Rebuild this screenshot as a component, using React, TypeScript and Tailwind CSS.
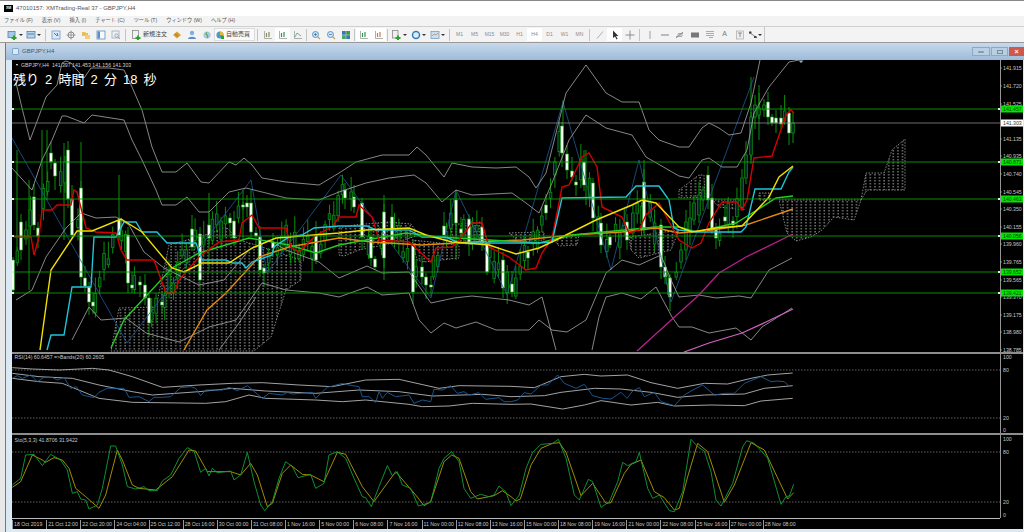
import type { ReactNode } from "react";

type Pt = [number, number];
type Pt3 = [number, number, number];

const pl = (pts: Pt[]) => pts.map(([x, y]) => `${x},${y}`).join(" ");
// points read off 3x crops of the lower panes
const fromCrop = (pts: Pt[], ox: number, oy: number): Pt[] => pts.map(([x, y]) => [x / 3 + ox, y / 3 + oy]);

const hLines = [
  { y: 109, label: "141.457" },
  { y: 162, label: "140.871" },
  { y: 199, label: "140.463" },
  { y: 236, label: "140.056" },
  { y: 272, label: "139.652" },
  { y: 293, label: "139.421" },
];

const priceTicks: [string, number][] = [
  ["141.915", 68], ["141.720", 86], ["141.525", 104], ["141.135", 139], ["140.935", 156], ["140.740", 174],
  ["140.545", 192], ["140.350", 209], ["140.155", 227], ["139.960", 244], ["139.765", 262], ["139.565", 280],
  ["139.370", 297], ["139.175", 315], ["138.980", 332], ["138.785", 350],
];

const bands: Pt[][] = [
  [[17, 83], [23, 108], [31, 140], [43, 108], [47, 97], [58, 85], [63, 63], [67, 61], [72, 63], [85, 78], [92, 68], [110, 68], [125, 70], [133, 87], [143, 110], [153, 147], [163, 172], [177, 172], [188, 163], [202, 182], [210, 183], [230, 162], [237, 165], [245, 158], [253, 165], [263, 178], [287, 182], [320, 185], [340, 173], [357, 162], [383, 155], [410, 155], [418, 147], [427, 155], [445, 177], [453, 163], [473, 167], [497, 168], [517, 167], [530, 177], [537, 188], [547, 173], [567, 93], [587, 65], [607, 93], [623, 102], [640, 102], [650, 130], [660, 140], [680, 147], [690, 147], [703, 128], [710, 123], [720, 128], [730, 135], [742, 133], [752, 103], [761, 60]],
  [[13, 168], [33, 190], [43, 160], [53, 140], [63, 116], [67, 116], [85, 123], [93, 115], [125, 120], [133, 140], [143, 160], [157, 190], [163, 205], [177, 205], [188, 197], [200, 212], [210, 212], [230, 192], [247, 188], [263, 192], [287, 198], [320, 200], [340, 192], [367, 183], [390, 178], [415, 175], [427, 183], [443, 202], [457, 190], [473, 195], [513, 193], [527, 203], [540, 213], [553, 183], [570, 140], [587, 115], [607, 128], [633, 135], [647, 157], [680, 176], [690, 178], [703, 160], [710, 158], [723, 167], [738, 167], [748, 150], [755, 113], [770, 87], [790, 62], [800, 60]],
  [[17, 300], [33, 290], [47, 257], [67, 228], [82, 213], [97, 218], [117, 217], [130, 225], [145, 252], [165, 268], [200, 285], [225, 280], [250, 250], [270, 240], [287, 250], [320, 262], [340, 278], [368, 266], [383, 273], [410, 272], [432, 303], [455, 298], [473, 296], [510, 300], [530, 305], [543, 297], [557, 350]],
  [[73, 340], [90, 307], [102, 320], [127, 318], [147, 333], [180, 342], [210, 327], [237, 320], [263, 283], [287, 290], [320, 293], [340, 297], [368, 287], [383, 295], [410, 293], [420, 320], [432, 333], [445, 323], [457, 328], [477, 322], [497, 330], [530, 330], [540, 320], [553, 330], [568, 332], [587, 320], [607, 273], [623, 260], [640, 265], [662, 255], [672, 280], [680, 297], [700, 295], [717, 298], [740, 296], [752, 298], [770, 270], [793, 258]],
  [[593, 350], [600, 317], [607, 297], [623, 293], [642, 299], [657, 287], [673, 317], [680, 327], [693, 327], [710, 333], [737, 328], [752, 340], [763, 327], [793, 308]],
  [[220, 350], [240, 323], [257, 297]],
];

const zigzag: Pt[] = [[13, 138], [128, 343], [252, 180], [268, 273], [342, 175], [432, 298], [457, 190], [508, 295], [564, 102], [612, 270], [640, 160], [672, 302], [755, 77]];

const red: Pt[] = [[15, 237], [32, 237], [35, 255], [40, 237], [43, 210], [53, 210], [58, 205], [72, 205], [75, 190], [78, 192], [87, 228], [97, 232], [117, 233], [122, 250], [128, 260], [155, 260], [167, 293], [175, 293], [180, 280], [200, 257], [220, 242], [240, 240], [243, 223], [253, 215], [260, 228], [287, 228], [292, 247], [300, 252], [317, 235], [333, 227], [340, 217], [357, 217], [360, 205], [373, 217], [380, 240], [410, 242], [432, 262], [437, 248], [453, 247], [460, 240], [473, 223], [483, 223], [490, 247], [510, 257], [527, 270], [537, 268], [543, 253], [553, 238], [560, 203], [563, 187], [570, 185], [583, 157], [590, 153], [598, 167], [603, 207], [623, 217], [630, 233], [640, 230], [647, 215], [660, 203], [673, 227], [680, 240], [693, 248], [702, 243], [710, 223], [723, 202], [738, 202], [743, 210], [748, 200], [755, 158], [773, 156], [787, 115], [792, 110], [795, 113]];

const cyan: Pt[] = [[48, 350], [52, 335], [65, 335], [73, 287], [92, 287], [95, 237], [117, 237], [125, 222], [137, 222], [143, 232], [158, 232], [168, 243], [197, 243], [203, 260], [227, 260], [233, 263], [243, 263], [247, 268], [253, 262], [273, 255], [275, 247], [290, 237], [303, 235], [315, 228], [340, 226], [368, 226], [377, 230], [410, 230], [423, 237], [447, 237], [460, 243], [483, 243], [540, 243], [553, 242], [563, 198], [627, 197], [637, 186], [660, 186], [670, 200], [675, 228], [680, 230], [700, 232], [742, 232], [747, 227], [756, 189], [782, 189], [790, 172], [794, 167]];

const yellow: Pt[] = [[41, 350], [52, 270], [78, 231], [93, 231], [122, 219], [143, 232], [173, 268], [185, 272], [203, 263], [230, 263], [253, 248], [277, 238], [340, 233], [367, 230], [410, 228], [427, 235], [453, 242], [467, 243], [490, 245], [517, 254], [540, 248], [557, 240], [597, 220], [633, 205], [643, 200], [657, 203], [680, 227], [693, 232], [717, 228], [743, 226], [770, 197], [780, 177], [794, 166]];

const green: Pt[] = [[112, 348], [125, 320], [173, 268], [200, 253], [250, 238], [290, 245], [317, 253], [340, 245], [367, 240], [407, 233], [440, 237], [540, 243], [573, 235], [657, 227], [680, 227], [697, 232], [737, 223], [750, 215], [777, 198], [794, 196]];

const orange: Pt[] = [[185, 350], [208, 310], [227, 293], [260, 257], [290, 247], [340, 238], [373, 242], [423, 245], [473, 242], [523, 240], [573, 235], [623, 232], [657, 228], [680, 233], [713, 230], [747, 225], [794, 209]];

const magenta: Pt[] = [[638, 351], [680, 313], [700, 295], [720, 273], [747, 257], [794, 234]];
const pink: Pt[] = [[685, 352], [710, 343], [743, 333], [767, 322], [794, 309]];

const clouds: Pt[][] = [
  [[120, 308], [157, 307], [170, 245], [213, 233], [227, 227], [240, 240], [257, 245], [302, 260], [302, 280], [287, 290], [272, 337], [255, 351], [112, 351]],
  [[340, 228], [355, 225], [390, 222], [412, 224], [420, 235], [405, 240], [385, 245], [360, 250], [345, 256], [340, 255]],
  [[413, 240], [460, 245], [460, 258], [425, 262], [418, 260]],
  [[450, 225], [482, 222], [485, 240], [470, 245], [455, 240]],
  [[510, 233], [545, 232], [545, 240], [520, 242]],
  [[555, 240], [580, 235], [578, 245], [560, 246]],
  [[630, 237], [680, 230], [672, 250], [640, 258], [632, 250]],
  [[680, 190], [700, 175], [705, 175], [706, 197], [680, 198]],
  [[713, 200], [743, 200], [745, 210], [720, 207]],
  [[760, 193], [770, 193], [772, 200], [760, 200]],
  [[780, 200], [862, 200], [855, 220], [835, 217], [823, 230], [812, 237], [797, 241], [788, 233]],
  [[862, 200], [867, 173], [885, 173], [893, 150], [906, 139], [906, 190], [868, 190]],
];

// white candles: x, body top, body bottom
const whites: Pt3[] = [
  [14, 260, 290], [22, 222, 250], [35, 197, 225], [39, 228, 236], [52, 153, 162], [56, 163, 176], [69, 150, 199], [73, 199, 235], [82, 188, 277], [86, 278, 286], [90, 287, 302], [94, 302, 306], [120, 220, 235], [129, 235, 283], [133, 285, 288], [141, 282, 285], [146, 285, 298], [150, 298, 323], [163, 302, 305], [193, 229, 247], [201, 234, 280], [210, 225, 238], [231, 218, 223], [235, 221, 238], [244, 205, 207], [248, 203, 207], [252, 203, 232], [257, 233, 236], [261, 237, 270], [265, 268, 273], [274, 242, 248], [317, 235, 260],
  [346, 190, 198], [355, 197, 207], [363, 203, 237], [372, 237, 258], [376, 259, 267], [385, 212, 258], [393, 217, 240], [414, 245, 292], [423, 267, 277], [427, 277, 285], [432, 285, 287], [445, 226, 235], [457, 200, 223], [462, 229, 233], [470, 219, 243], [483, 227, 243], [488, 243, 272], [504, 260, 288], [513, 284, 292], [529, 252, 258], [547, 205, 213], [563, 126, 153], [568, 154, 170], [573, 171, 177], [577, 182, 185], [585, 162, 185], [594, 183, 218], [602, 223, 245], [611, 237, 245], [628, 222, 240], [645, 182, 228], [662, 225, 267], [666, 267, 277], [671, 278, 297],
  [709, 175, 200], [713, 198, 230], [717, 230, 238], [726, 217, 221], [734, 221, 225], [769, 102, 117], [773, 117, 123], [777, 118, 123], [782, 118, 124], [790, 113, 133],
];

const darks: Pt3[] = [[682, 250, 262], [687, 222, 250], [691, 218, 232], [695, 203, 220], [700, 195, 215], [704, 190, 200], [743, 178, 207], [747, 155, 178], [752, 117, 155], [756, 105, 117], [760, 108, 115], [765, 105, 110], [794, 123, 133]];

const longWicks: Pt3[] = [[43, 130, 210], [48, 130, 200], [65, 143, 240], [82, 142, 190], [120, 175, 240], [210, 193, 270], [244, 190, 240], [457, 190, 260], [564, 100, 130], [645, 160, 235], [752, 77, 160], [760, 85, 140], [18, 150, 262], [30, 180, 290], [385, 195, 280], [587, 150, 205]];

// fill the bars between the ones read off the crop
function fillerBars() {
  const known = [...whites, ...darks].sort((a, b) => a[0] - b[0]);
  const out: Pt3[] = [];
  for (let i = 0; i < 180; i++) {
    const x = 14 + i * 4.335;
    if (known.some((k) => Math.abs(k[0] - x) < 2.2)) continue;
    const next = known.findIndex((k) => k[0] > x);
    const a = known[Math.max(next - 1, 0)];
    const b = known[next < 0 ? known.length - 1 : next];
    const t = b[0] === a[0] ? 0 : (x - a[0]) / (b[0] - a[0]);
    const mid = (a[1] + a[2]) / 2 + (((b[1] + b[2]) / 2 - (a[1] + a[2]) / 2) * t) + ((i * 13) % 21) - 10;
    const h = 5 + ((i * 7) % 17);
    out.push([x, mid - h / 2, mid + h / 2]);
  }
  return out;
}

const rsiUpper = [...fromCrop([[40, 68], [100, 72], [180, 75], [280, 70], [330, 75], [400, 95], [490, 127], [600, 120], [700, 115], [790, 113], [900, 120], [1000, 125], [1100, 105], [1200, 103], [1320, 130], [1380, 122], [1536, 124]], 0, 345), ...fromCrop([[70, 128], [90, 120], [150, 95], [220, 88], [270, 93], [350, 90], [420, 113], [500, 130], [580, 115], [650, 117], [720, 100], [770, 90], [845, 84]], 512, 345)];
const rsiMid = [...fromCrop([[40, 85], [120, 95], [220, 100], [300, 120], [400, 140], [460, 150], [600, 140], [700, 130], [800, 138], [950, 145], [1080, 135], [1200, 140], [1300, 153], [1450, 148], [1536, 155]], 0, 345), ...fromCrop([[100, 152], [150, 142], [250, 130], [330, 132], [420, 142], [500, 157], [580, 150], [700, 147], [760, 130], [845, 122]], 512, 345)];
const rsiLower = [...fromCrop([[40, 100], [120, 110], [190, 115], [300, 160], [400, 172], [620, 175], [680, 170], [750, 150], [800, 160], [950, 165], [1030, 170], [1100, 165], [1230, 178], [1270, 185], [1350, 183], [1420, 175], [1536, 178]], 0, 345), ...fromCrop([[60, 177], [155, 192], [220, 180], [270, 167], [360, 180], [440, 172], [490, 183], [600, 180], [700, 182], [750, 168], [845, 160]], 512, 345)];
const rsiLine = [...fromCrop([[40, 100], [55, 92], [70, 100], [95, 90], [115, 110], [135, 97], [160, 97], [175, 105], [195, 97], [215, 130], [232, 125], [250, 150], [285, 158], [300, 142], [325, 130], [355, 130], [375, 130], [390, 157], [420, 155], [450, 170], [465, 157], [490, 157], [515, 155], [545, 128], [575, 125], [590, 130], [605, 152], [620, 135], [670, 135], [690, 127], [715, 137], [745, 122], [790, 160], [810, 145], [850, 150], [865, 142], [880, 147], [940, 142], [950, 160], [985, 127], [1030, 115], [1050, 120], [1080, 125], [1090, 155], [1110, 155], [1130, 172], [1140, 140], [1150, 160], [1165, 142], [1190, 155], [1230, 150], [1245, 175], [1270, 165], [1295, 170], [1305, 133], [1330, 135], [1355, 122], [1375, 145], [1395, 140], [1410, 150], [1440, 143], [1460, 163], [1500, 158], [1515, 170], [1536, 170]], 0, 345), ...fromCrop([[20, 165], [40, 143], [60, 147], [90, 120], [110, 120], [140, 90], [160, 115], [195, 130], [220, 118], [245, 152], [275, 160], [300, 162], [330, 142], [348, 160], [365, 138], [385, 128], [400, 155], [430, 142], [450, 170], [490, 182], [520, 150], [540, 138], [575, 120], [610, 150], [640, 145], [670, 145], [700, 115], [750, 95], [780, 110], [800, 108], [820, 110], [835, 125]], 512, 345)];

const stoMain = [...fromCrop([[40, 420], [65, 400], [80, 330], [105, 328], [130, 362], [155, 328], [185, 345], [205, 375], [220, 445], [235, 440], [245, 462], [260, 465], [270, 492], [295, 480], [310, 430], [335, 303], [350, 303], [370, 360], [385, 425], [410, 432], [435, 425], [450, 437], [475, 437], [490, 408], [515, 390], [540, 340], [565, 308], [585, 318], [605, 382], [620, 370], [630, 393], [640, 370], [655, 383], [695, 378], [705, 405], [725, 390], [745, 322], [765, 410], [785, 480], [797, 497], [820, 470], [840, 400], [860, 350], [880, 365], [897, 398], [935, 388], [950, 430], [975, 415], [990, 330], [1015, 320], [1040, 340], [1065, 400], [1090, 455], [1100, 458], [1117, 485], [1140, 425], [1165, 362], [1180, 392], [1195, 380], [1210, 420], [1235, 430], [1258, 483], [1295, 472], [1320, 370], [1335, 340], [1358, 320], [1380, 350], [1395, 430], [1415, 460], [1445, 448], [1470, 455], [1485, 450], [1500, 423], [1520, 440], [1536, 482]], 0, 345), ...fromCrop([[25, 450], [45, 370], [65, 322], [90, 298], [125, 295], [142, 283], [165, 340], [190, 450], [205, 465], [232, 403], [245, 410], [270, 487], [295, 470], [320, 410], [335, 352], [350, 362], [375, 350], [385, 322], [410, 430], [425, 460], [445, 450], [475, 497], [490, 500], [515, 440], [540, 283], [560, 305], [580, 318], [600, 380], [615, 465], [630, 483], [665, 415], [695, 305], [707, 287], [730, 295], [770, 340], [810, 478], [825, 455], [835, 453], [848, 418]], 512, 345)];
const stoSignal = [...fromCrop([[40, 427], [65, 410], [100, 330], [130, 345], [140, 352], [165, 338], [190, 345], [210, 370], [230, 430], [260, 455], [300, 490], [320, 450], [355, 315], [370, 345], [400, 420], [420, 430], [470, 435], [520, 395], [570, 315], [590, 318], [625, 380], [695, 380], [725, 390], [755, 355], [775, 390], [805, 485], [820, 475], [850, 385], [875, 360], [910, 388], [935, 390], [975, 410], [1015, 322], [1040, 328], [1090, 425], [1125, 470], [1150, 435], [1190, 380], [1250, 450], [1275, 482], [1295, 470], [1335, 350], [1358, 330], [1380, 340], [1415, 440], [1435, 462], [1485, 452], [1510, 437], [1536, 455]], 0, 345), ...fromCrop([[15, 468], [28, 462], [60, 360], [90, 310], [125, 295], [145, 293], [165, 322], [210, 452], [245, 415], [285, 475], [300, 473], [340, 385], [360, 358], [390, 345], [430, 440], [460, 458], [490, 495], [505, 490], [530, 395], [560, 295], [590, 320], [640, 472], [670, 420], [720, 293], [760, 315], [830, 462], [848, 443]], 512, 345)];

const dates = ["18 Oct 2019", "21 Oct 12:00", "22 Oct 20:00", "24 Oct 04:00", "25 Oct 12:00", "28 Oct 16:00", "30 Oct 00:00", "31 Oct 08:00", "1 Nov 16:00", "5 Nov 00:00", "6 Nov 08:00", "7 Nov 16:00", "11 Nov 00:00", "12 Nov 08:00", "13 Nov 16:00", "15 Nov 00:00", "18 Nov 08:00", "19 Nov 16:00", "21 Nov 00:00", "22 Nov 08:00", "25 Nov 16:00", "27 Nov 00:00", "28 Nov 08:00"];

const menus = ["ファイル (F)", "表示 (V)", "挿入 (I)", "チャート (C)", "ツール (T)", "ウィンドウ (W)", "ヘルプ (H)"];

const Sep = () => <div className="mx-[2px] h-[12px] w-[1px] shrink-0 bg-[#c4c4c4]" />;
const SepThin = () => <div className="mx-[1px] h-[12px] w-[1px] shrink-0 bg-[#c4c4c4]" />;
const Drop = () => <div className="mr-[2px] h-0 w-0 shrink-0 border-x-[2px] border-t-[2px] border-x-transparent border-t-[#333]" />;
const Tool = ({ children, active, w = "w-[15px]" }: { children: ReactNode; active?: boolean; w?: string }) => (
  <div className={`flex h-[13px] shrink-0 items-center justify-center ${w} ${active ? "bg-white" : ""}`}>{children}</div>
);
const Ico = ({ children }: { children: ReactNode }) => (
  <svg viewBox="0 0 10 10" className="h-[10px] w-[10px]" fill="none">
    {children}
  </svg>
);

const Plus = () => <path d="M6 5.5h2v1.5h1.5v2H8v1H6V9H4.5V7H6z" fill="#2aa52a" />;
const MiniChart = ({ c }: { c: string }) => (
  <Ico>
    <path d="M1.5 1v7.5H9" stroke="#9a9a9a" strokeWidth="0.8" />
    <path d="M3.5 3v4M6 2v5" stroke={c} strokeWidth="1.2" />
  </Ico>
);
const Tf = ({ t, active }: { t: string; active?: boolean }) => (
  <Tool active={active}>
    <span className="text-[5px] text-[#8a8a8a]">{t}</span>
  </Tool>
);

function Toolbar() {
  return (
    <div className="flex h-[15px] w-[765px] shrink-0 items-center border-r border-[#c8c8c8] pl-[4px]">
      <Tool><Ico><rect x="1" y="1.5" width="7" height="6" fill="#a8c8e4" stroke="#4f81b3" strokeWidth="0.8" /><Plus /></Ico></Tool>
      <Drop />
      <Tool w="w-[12px]"><Ico><rect x="1" y="1.5" width="8" height="6.5" fill="#b9d3ea" stroke="#4f81b3" strokeWidth="0.8" /><path d="M2 4h6" stroke="#4f81b3" /></Ico></Tool>
      <Drop />
      <Sep />
      <Tool><Ico><rect x="1" y="1" width="8" height="8" fill="#dbeafa" stroke="#6a9bc8" strokeWidth="0.8" /><path d="M3 3l3 3" stroke="#3a9a3a" /><path d="M6 3l1 3" stroke="#d04030" /></Ico></Tool>
      <Tool><Ico><circle cx="5" cy="5" r="3" stroke="#8a8a8a" /><path d="M5 0.5v9M0.5 5h9" stroke="#8a8a8a" strokeWidth="0.8" /></Ico></Tool>
      <Tool><Ico><path d="M1 2h3l1 1h2v3H1z" fill="#e8bf50" /><path d="M4 5h5v4H4z" fill="#f2d070" /></Ico></Tool>
      <Tool><Ico><rect x="1" y="1" width="8" height="8" fill="#f7fbff" stroke="#5e8fbe" strokeWidth="0.8" /><rect x="1.5" y="1.5" width="2.5" height="7" fill="#5e8fbe" /></Ico></Tool>
      <Tool><Ico><rect x="1" y="1" width="7" height="7" fill="#eef2f6" stroke="#9aa8b6" strokeWidth="0.8" /><circle cx="5.5" cy="5.5" r="1.7" stroke="#7a8a9a" strokeWidth="0.7" /><path d="M7 7l2 2" stroke="#c8a040" /></Ico></Tool>
      <Sep />
      <Tool><Ico><rect x="1.5" y="0.5" width="6" height="8" fill="#f2f2f2" stroke="#8a8a8a" strokeWidth="0.8" /><Plus /></Ico></Tool>
      <span className="w-[26px] shrink-0 whitespace-nowrap text-[6px] text-[#444]">新規注文</span>
      <Tool><Ico><path d="M5 1.5l4 3.5-4 3.5L1 5z" fill="#d9a030" /><path d="M3 4l3 2" stroke="#8a5a10" strokeWidth="0.7" /></Ico></Tool>
      <Tool><Ico><circle cx="5" cy="3" r="2.2" fill="#7fb0e0" /><path d="M1 9c0-3 8-3 8 0z" fill="#5b8fc7" /></Ico></Tool>
      <Tool><Ico><circle cx="5" cy="5" r="3.6" fill="#a9c9dc" /><path d="M5 2.5c-1.5 1-1 2 0 2.5s1 2 0 3" stroke="#59a55a" strokeWidth="1.1" /></Ico></Tool>
      <div className="flex h-[13px] w-[41px] shrink-0 items-center gap-[1px] border border-[#dcdcdc] bg-[#fafafa]">
        <Ico><circle cx="5" cy="5" r="3.6" fill="#4c9bc9" /><path d="M5 1.5a3.5 3.5 0 0 1 3.5 3.5H5z" fill="#e8b83c" /><path d="M6 6h3v3H6z" fill="#2aa52a" /></Ico>
        <span className="whitespace-nowrap text-[6px] text-[#444]">自動売買</span>
      </div>
      <Sep />
      <Tool><MiniChart c="#8a8a5a" /></Tool>
      <Tool active><MiniChart c="#2a9a4a" /></Tool>
      <Tool><Ico><path d="M1.5 1v7.5H9" stroke="#9a9a9a" strokeWidth="0.8" /><path d="M2 7l2-4 4 3" stroke="#5a9a7a" strokeWidth="0.8" /></Ico></Tool>
      <SepThin />
      <Tool><Ico><circle cx="4.5" cy="4.5" r="3" fill="#cfe4f6" stroke="#5e93c4" /><path d="M3 4.5h3M4.5 3v3" stroke="#2e6fa8" strokeWidth="0.7" /><path d="M6.8 6.8l2.2 2.2" stroke="#c8a040" strokeWidth="1.2" /></Ico></Tool>
      <Tool><Ico><circle cx="4.5" cy="4.5" r="3" fill="#cfe4f6" stroke="#5e93c4" /><path d="M3 4.5h3" stroke="#2e6fa8" strokeWidth="0.7" /><path d="M6.8 6.8l2.2 2.2" stroke="#c8a040" strokeWidth="1.2" /></Ico></Tool>
      <Tool><Ico><rect x="1" y="1" width="3.8" height="3.8" fill="#3a78b8" /><rect x="5.2" y="1" width="3.8" height="3.8" fill="#3a9a4a" /><rect x="1" y="5.2" width="3.8" height="3.8" fill="#4aa85a" /><rect x="5.2" y="5.2" width="3.8" height="3.8" fill="#3a78b8" /></Ico></Tool>
      <SepThin />
      <Tool active><MiniChart c="#2a9a4a" /></Tool>
      <Tool active><MiniChart c="#c87a50" /></Tool>
      <SepThin />
      <Tool w="w-[14px]"><Ico><rect x="1.5" y="0.5" width="5.5" height="7.5" fill="#eee" stroke="#8a8a8a" strokeWidth="0.8" /><Plus /></Ico></Tool>
      <Drop />
      <Tool w="w-[13px]"><Ico><circle cx="5" cy="5" r="3.5" fill="#dcecf8" stroke="#2f7fbe" strokeWidth="1.5" /></Ico></Tool>
      <Drop />
      <Tool w="w-[13px]"><Ico><rect x="1" y="1.5" width="8" height="7" fill="#c9dff2" stroke="#7a9cbc" strokeWidth="0.8" /><path d="M2 6l2-2 2 1 2-2" stroke="#d07a40" strokeWidth="0.7" /></Ico></Tool>
      <Drop />
      <Sep />
      <Tf t="M1" />
      <Tf t="M5" />
      <Tf t="M15" />
      <Tf t="M30" />
      <Tf t="H1" />
      <Tf t="H4" active />
      <Tf t="D1" />
      <Tf t="W1" />
      <Tf t="MN" />
      <Sep />
      <Tool><Ico><path d="M2 8.5L8 1.5" stroke="#9a9a9a" strokeWidth="0.8" /></Ico></Tool>
      <Tool active><Ico><path d="M3 0.5v7.5l2-1.6 1.6 3 1-.6L6 6h2.4z" fill="#333" /></Ico></Tool>
      <Tool><Ico><path d="M5 0.5v9M0.5 5h9" stroke="#777" strokeWidth="0.8" /></Ico></Tool>
      <Sep />
      <Tool><Ico><path d="M5 1v8" stroke="#888" strokeWidth="0.8" /></Ico></Tool>
      <Tool><Ico><path d="M1 5h8" stroke="#666" strokeWidth="0.8" /></Ico></Tool>
      <Tool><Ico><path d="M1 8l7-6" stroke="#777" strokeWidth="0.8" /><path d="M2 5h6M3 3.5h5M1 6.5h6" stroke="#888" strokeWidth="0.7" /></Ico></Tool>
      <Tool><Ico><rect x="1" y="2.5" width="8" height="5" fill="#777" /></Ico></Tool>
      <Tool><Ico><path d="M1 1.5h8M1 3.5h8M1 5.5h8M4 7.5h4" stroke="#999" strokeWidth="0.8" /></Ico></Tool>
      <Tool><span className="text-[7px] text-[#777]">A</span></Tool>
      <Tool><Ico><rect x="1.5" y="1" width="7" height="8" fill="#eee" stroke="#aaa" strokeWidth="0.7" /><path d="M3 3h4M5 3v4" stroke="#777" strokeWidth="0.8" /></Ico></Tool>
      <Tool w="w-[11px]"><Ico><path d="M1 2.5l4 2.5 4 3" stroke="#555" strokeWidth="0.7" /><rect x="1" y="1.5" width="2.5" height="2" fill="#444" /><rect x="6" y="6" width="2.5" height="2" fill="#444" /></Ico></Tool>
      <Drop />
    </div>
  );
}

const chartText = "fill-[#c8c8c8] text-[5.2px]";

function MainPane() {
  const fillers = fillerBars();
  return (
    <div className="relative h-[292px] shrink-0">
      <svg viewBox="13 60 1011 292" className="h-[292px] w-[1011px]">
        <defs>
          <pattern id="hatch" width="4.6" height="3" patternUnits="userSpaceOnUse">
            <rect x="1.5" y="0" width="0.8" height="1.5" fill="#d8d8d8" />
          </pattern>
        </defs>
        {clouds.map((c, i) => (
          <polygon key={i} points={pl(c)} fill="url(#hatch)" stroke="#bbb" strokeWidth="0.7" strokeDasharray="1.5 1.5" />
        ))}
        {longWicks.map(([x, a, b], i) => (
          <line key={i} x1={x} x2={x} y1={a} y2={b} stroke="#0a8f0a" />
        ))}
        {[...fillers, ...darks].map(([x, a, b], i) => (
          <g key={i}>
            <line x1={x} x2={x} y1={a - 4 - ((i * 5) % 14)} y2={b + 3 + ((i * 3) % 11)} stroke="#0a8f0a" />
            <rect x={x - 1.3} y={a} width="2.6" height={b - a} fill="#022" stroke="#0a8f0a" strokeWidth="0.8" />
          </g>
        ))}
        {whites.map(([x, a, b], i) => (
          <g key={i}>
            <line x1={x} x2={x} y1={a - 3 - ((i * 5) % 12)} y2={b + 3 + ((i * 7) % 12)} stroke="#0a8f0a" />
            <rect x={x - 1.5} y={a} width="3" height={Math.max(b - a, 1)} fill="#f2fff0" stroke="#1f9f1f" strokeWidth="0.6" />
          </g>
        ))}
        <polyline points={pl(zigzag)} fill="none" stroke="#1d5a96" strokeWidth="0.8" />
        {bands.map((b, i) => (
          <polyline key={i} points={pl(b)} fill="none" stroke="#a8a8a8" strokeWidth="0.8" />
        ))}
        <polyline points={pl(pink)} fill="none" stroke="#d060c0" strokeWidth="1.3" />
        <polyline points={pl(magenta)} fill="none" stroke="#b8208c" strokeWidth="1.3" />
        <polyline points={pl(orange)} fill="none" stroke="#e48a12" strokeWidth="1.4" />
        <polyline points={pl(green)} fill="none" stroke="#22cc22" strokeWidth="1.4" />
        <polyline points={pl(red)} fill="none" stroke="#d40000" strokeWidth="1.4" />
        <polyline points={pl(cyan)} fill="none" stroke="#22c4d8" strokeWidth="1.4" />
        <polyline points={pl(yellow)} fill="none" stroke="#f0e000" strokeWidth="1.4" />
        <line x1="13" x2="1001" y1="123" y2="123" stroke="#8a8a8a" strokeWidth="0.8" />
        {hLines.map((h) => (
          <g key={h.y}>
            <line x1="13" x2="1001" y1={h.y} y2={h.y} stroke="#0c9c0c" strokeWidth="0.9" />
            <rect x="13" y={h.y - 1} width="2" height="2" fill="#c8ffc8" />
            <rect x="999" y={h.y - 1} width="2" height="2" fill="#c8ffc8" />
          </g>
        ))}
        <path d="M799.5 60.5h5l-2.5 2.5z" fill="#9fb4c8" />
        <line x1="1001.5" x2="1001.5" y1="60" y2="352" stroke="#bbb" strokeWidth="0.8" />
        {priceTicks.map(([t, y]) => (
          <g key={t}>
            <line x1="1001" x2="1003" y1={y} y2={y} stroke="#bbb" strokeWidth="0.6" />
            <text x="1004" y={y + 2} className={chartText}>{t}</text>
          </g>
        ))}
        {hLines.map((h) => (
          <g key={h.label}>
            <rect x="1002" y={h.y - 3.5} width="22" height="7" fill="#00e400" />
            <text x="1004" y={h.y + 2} className="fill-[#0a3a0a] text-[5.2px]">{h.label}</text>
          </g>
        ))}
        <rect x="1002" y="119.5" width="22" height="7" fill="#fff" />
        <text x="1004" y="125" className="fill-[#333] text-[5.2px]">141.303</text>
      </svg>
      <div className="absolute left-[4px] top-[2px] flex items-center gap-[3px] text-[5.2px] leading-[6px] text-[#d0d0d0]">
        <span className="h-0 w-0 border-x-[1.5px] border-t-[2px] border-x-transparent border-t-white" />
        <span>GBPJPY,H4</span>
        <span>141.397 141.453 141.156 141.303</span>
      </div>
      <div className="absolute left-[1px] top-[10px] whitespace-pre text-[13px] leading-[20px] text-white [word-spacing:2.5px]">残り 2 時間 2 分 18 秒</div>
    </div>
  );
}

const ScaleText = ({ items }: { items: [string, number][] }) => (
  <>
    {items.map(([t, y]) => (
      <text key={t} x="1004" y={y + 2} className={chartText}>{t}</text>
    ))}
  </>
);

function RsiPane() {
  return (
    <svg viewBox="13 354 1011 79" className="h-[79px] w-[1011px] shrink-0">
      {[370, 418].map((y) => (
        <line key={y} x1="13" x2="1001" y1={y} y2={y} stroke="#8a8a8a" strokeWidth="0.7" strokeDasharray="1.5 1.5" />
      ))}
      {[rsiUpper, rsiMid, rsiLower].map((b, i) => (
        <polyline key={i} points={pl(b)} fill="none" stroke="#b4b4b4" strokeWidth="0.9" />
      ))}
      <polyline points={pl(rsiLine)} fill="none" stroke="#1b5f9e" strokeWidth="0.9" />
      <line x1="1001.5" x2="1001.5" y1="354" y2="433" stroke="#bbb" strokeWidth="0.8" />
      <text x="15.5" y="359" className={chartText}>RSI(14) 60.6457  =&gt;Bands(20) 60.2605</text>
      <ScaleText items={[["100", 357], ["80", 370], ["20", 418], ["0", 430]]} />
    </svg>
  );
}

function StoPane() {
  return (
    <svg viewBox="13 435 1011 83" className="h-[83px] w-[1011px] shrink-0">
      {[452, 502].map((y) => (
        <line key={y} x1="13" x2="1001" y1={y} y2={y} stroke="#8a8a8a" strokeWidth="0.7" strokeDasharray="1.5 1.5" />
      ))}
      <polyline points={pl(stoSignal)} fill="none" stroke="#b39c00" strokeWidth="0.9" />
      <polyline points={pl(stoMain)} fill="none" stroke="#0fa03a" strokeWidth="0.9" />
      <line x1="1001.5" x2="1001.5" y1="435" y2="518" stroke="#bbb" strokeWidth="0.8" />
      <text x="15.5" y="442" className={chartText}>Sto(5,3,3) 41.8706 31.9422</text>
      <ScaleText items={[["100", 439], ["80", 452], ["20", 502], ["0", 515]]} />
    </svg>
  );
}

function DateAxis() {
  return (
    <div className="flex h-[11px] w-[988px] shrink-0 items-center border-t border-[#bbb]">
      {dates.map((d) => (
        <div key={d} className="w-[34.13px] shrink-0 whitespace-nowrap border-l border-[#999] pl-[1px] text-[5.2px] leading-[9px] text-[#c8c8c8]">
          {d}
        </div>
      ))}
    </div>
  );
}

export default function App() {
  return (
    <div className="flex h-[532px] w-[1024px] flex-col overflow-hidden bg-white [font-family:'Liberation_Sans','Noto_Sans_CJK_JP',sans-serif]">
      <div className="flex h-[16px] shrink-0 items-center gap-[2px] border-t border-[#8a8a8a] bg-white pl-[4px]">
        <div className="flex h-[7px] w-[9px] items-center justify-center bg-black text-[3.5px] font-bold text-white">XM</div>
        <span className="ml-[1px] text-[6px] text-[#555]">47010157: XMTrading-Real 37 - GBPJPY,H4</span>
      </div>
      <div className="flex h-[11px] shrink-0 items-center gap-[9px] border-b border-[#cfcfcf] bg-[#f3f3f3] pl-[4px] text-[5.2px] text-[#555]">
        {menus.map((m) => (
          <span key={m}>{m}</span>
        ))}
      </div>
      <div className="flex h-[15px] shrink-0 bg-[#f3f3f3]">
        <Toolbar />
      </div>
      <div className="flex min-h-0 flex-1 border-t border-[#9a9a9a] bg-[#f0f0f0]">
        <div className="w-[6px] shrink-0 border-r border-[#777] bg-[#e8e8e8]" />
        <div className="flex min-w-0 flex-1 flex-col">
          <div className="flex h-[17px] shrink-0 items-center justify-between bg-gradient-to-b from-[#c7d9ec] to-[#9dbbd9] pl-[6px]">
            <div className="flex items-center gap-[2px]">
              <div className="h-[7px] w-[7px] rounded-[1px] border border-[#7fa8cc] bg-[#dbe9f5]" />
              <span className="ml-[1px] text-[6px] text-[#4a5560]">GBPJPY,H4</span>
            </div>
            <div className="flex items-center gap-[1px]">
              <div className="flex h-[9px] w-[18px] items-center justify-center border border-[#8ea8c0] bg-[#b9cfe3]">
                <div className="h-[2px] w-[6px] rounded-[1px] bg-[#8a9aa8]" />
              </div>
              <div className="flex h-[9px] w-[17px] items-center justify-center border border-[#8ea8c0] bg-[#b9cfe3]">
                <div className="h-[4px] w-[6px] border border-[#7a8a98]" />
              </div>
              <div className="flex h-[9px] w-[15px] items-center justify-center bg-[#d0584a] text-[7px] font-bold leading-none text-white">×</div>
            </div>
          </div>
          <div className="flex min-h-0 flex-1 bg-[#dbe9f5]">
            <div className="w-[6px] shrink-0 bg-[#dbe9f5]" />
            <div className="flex h-[469px] w-[1011px] shrink-0 flex-col bg-black">
              <MainPane />
              <div className="h-[2px] shrink-0 bg-[#8e8e8e]" />
              <RsiPane />
              <div className="h-[2px] shrink-0 bg-[#8e8e8e]" />
              <StoPane />
              <DateAxis />
            </div>
          </div>
        </div>
      </div>
    </div>
  );
}
